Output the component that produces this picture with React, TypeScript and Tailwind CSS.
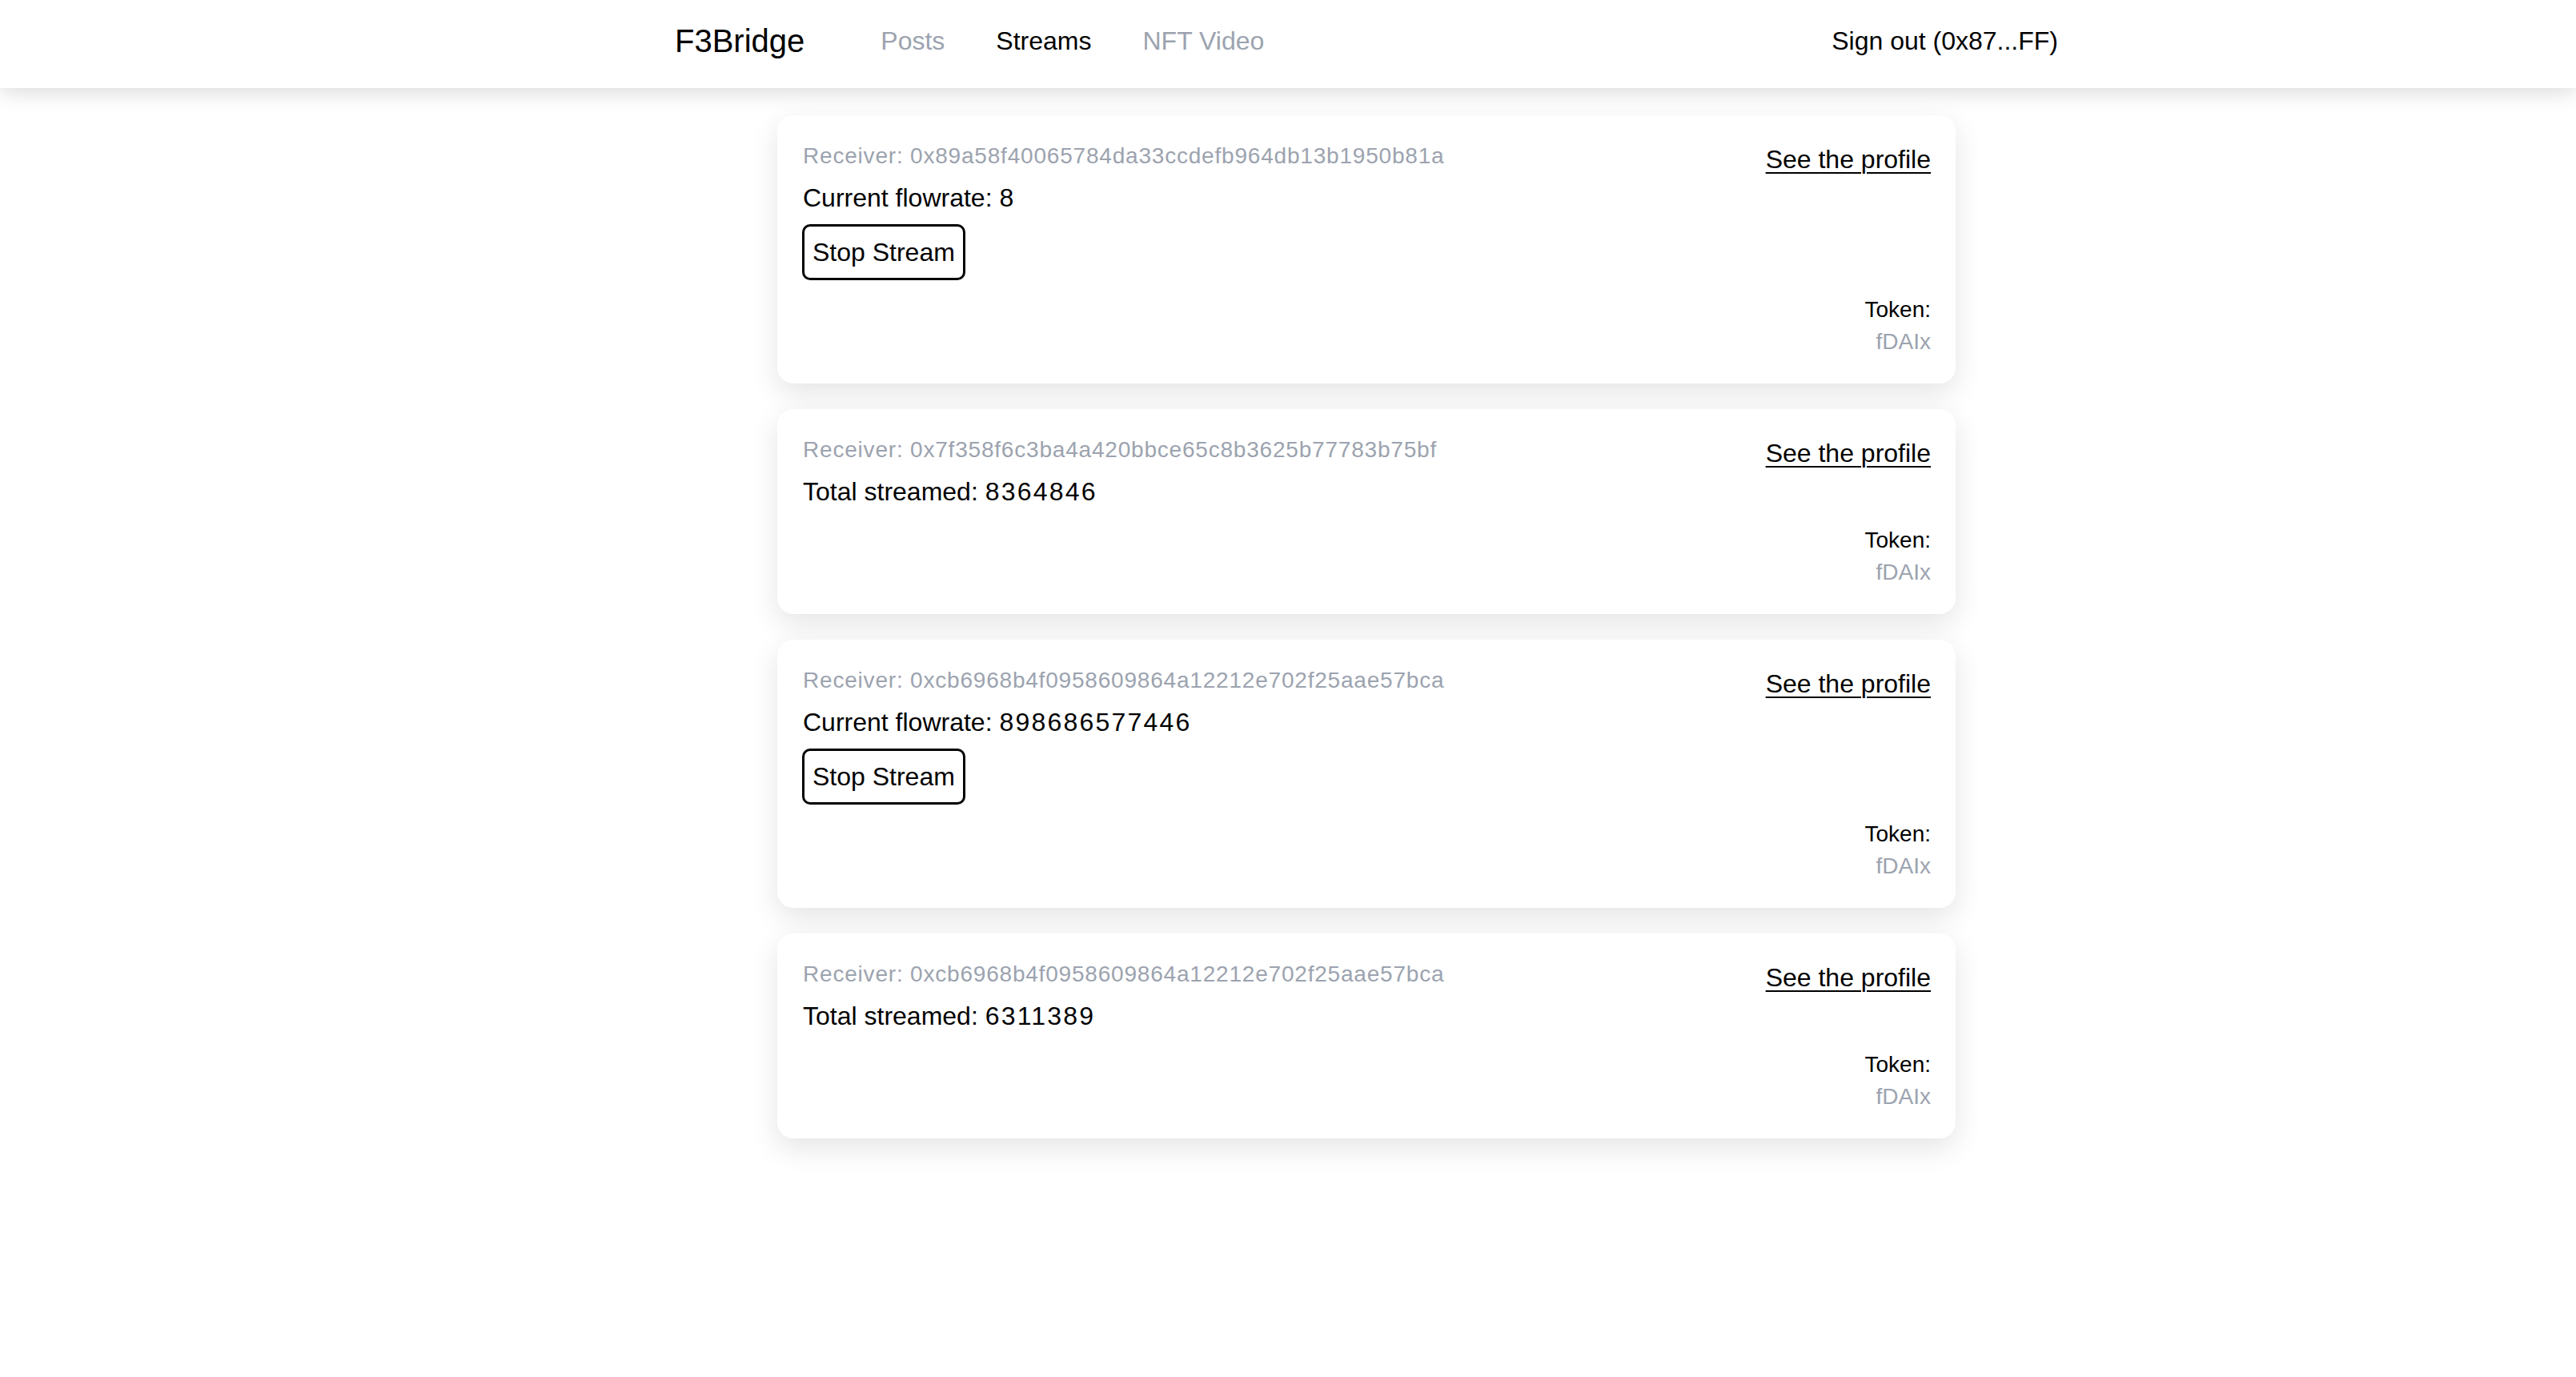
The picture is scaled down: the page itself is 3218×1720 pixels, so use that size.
import React from 'react';

type Stream = {
  receiver: string;
  label: string;
  value: string;
  active: boolean;
  token: string;
};

const streams: Stream[] = [
  { receiver: '0x89a58f40065784da33ccdefb964db13b1950b81a', label: 'Current flowrate', value: '8', active: true, token: 'fDAIx' },
  { receiver: '0x7f358f6c3ba4a420bbce65c8b3625b77783b75bf', label: 'Total streamed', value: '8364846', active: false, token: 'fDAIx' },
  { receiver: '0xcb6968b4f0958609864a12212e702f25aae57bca', label: 'Current flowrate', value: '898686577446', active: true, token: 'fDAIx' },
  { receiver: '0xcb6968b4f0958609864a12212e702f25aae57bca', label: 'Total streamed', value: '6311389', active: false, token: 'fDAIx' },
];

const NAV = [
  { name: 'Posts', current: false },
  { name: 'Streams', current: true },
  { name: 'NFT Video', current: false },
];

function StreamCard({ s }: { s: Stream }) {
  return (
    <div className="rounded-[20px] bg-white px-[31px] pt-[31px] pb-[32px] shadow-[0_12px_36px_rgba(0,0,0,0.11)]">
      <div className="flex items-start justify-between">
        <div>
          <p className="pl-px text-[28px] leading-[40px] tracking-[0.8px] text-[#9ca3af]">Receiver: {s.receiver}</p>
          <p className="mt-2 pl-px text-[32px] leading-[48px] text-black">
            {s.label}: <span className="tracking-[2.2px]">{s.value}</span>
          </p>
          {s.active && (
            <button className="mt-[9px] rounded-[10px] border-[3px] border-black bg-white px-[10px] py-[8px] text-[32px] leading-[48px] text-black">
              Stop Stream
            </button>
          )}
        </div>
        <a href="#" className="text-[32px] leading-[48px] text-black underline decoration-[2px] underline-offset-[5px]">
          See the profile
        </a>
      </div>
      <div className="mt-[17px] flex flex-col items-end text-[28px] leading-[40px]">
        <span className="text-black">Token:</span>
        <span className="text-[#9ca3af]">{s.token}</span>
      </div>
    </div>
  );
}

export default function App() {
  return (
    <div className="min-h-[1720px] bg-white font-['Liberation_Sans',Arial,sans-serif] text-black">
      {/* Top bar */}
      <header className="relative z-10 h-[110px] bg-white shadow-[0_6px_24px_rgba(0,0,0,0.14)]">
        <div className="flex h-full justify-center pb-[8px] pl-[196px]">
          <div className="flex w-[1728px] items-center justify-between">
            <div className="flex items-center">
              <span className="text-[40px] leading-[56px]">F3Bridge</span>
              <nav className="ml-[95px] flex items-center gap-16">
                {NAV.map(n => (
                  <a key={n.name} href="#" className={`text-[32px] leading-[48px] ${n.current ? 'text-black' : 'text-[#9ca3af]'}`}>
                    {n.name}
                  </a>
                ))}
              </nav>
            </div>
            <button className="text-[32px] leading-[48px] text-black">Sign out (0x87...FF)</button>
          </div>
        </div>
      </header>

      {/* Streams list */}
      <main className="flex justify-center pl-[196px] pt-[34px]">
        <div className="flex w-[1472px] flex-col gap-8">
          {streams.map((s, i) => (
            <StreamCard key={i} s={s} />
          ))}
        </div>
      </main>
    </div>
  );
}
